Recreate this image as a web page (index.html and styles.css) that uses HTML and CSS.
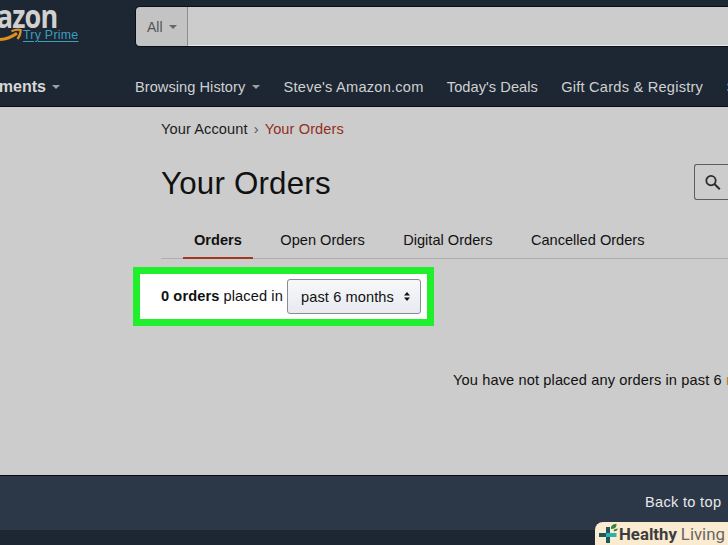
FILE: index.html
```html
<!DOCTYPE html>
<html lang="en">
<head>
  <meta charset="UTF-8">
  <meta name="viewport" content="width=device-width, initial-scale=1.0">
  <title>Your Orders</title>
  <link rel="stylesheet" href="styles.css">
</head>
<body>

  <header class="header">
    <div class="header-top">
      <div class="logo">
        <div class="logo-text">amazon</div>
        <svg class="logo-smile" width="24" height="16" viewBox="0 0 24 16">
          <path d="M0 12.4 Q9 12 17 6.2" fill="none" stroke="#e0901c" stroke-width="3"/>
          <path d="M11.5 4.2 Q16.5 2 20.6 3 Q21 7.5 17.5 12" fill="none" stroke="#e0901c" stroke-width="2.2"/>
        </svg>
        <a class="logo-prime">Try Prime</a>
      </div>
      <div class="search">
        <div class="search-category">All <span class="caret"></span></div>
        <div class="search-input"></div>
      </div>
    </div>
    <div class="header-bottom">
      <div class="departments"><span class="departments-text">Departments</span><span class="caret"></span></div>
      <nav class="nav">
        <a>Browsing History<span class="caret"></span></a>
        <a class="wide">Steve's Amazon.com</a>
        <a>Today's Deals</a>
        <a class="wide">Gift Cards &amp; Registry</a>
        <a>Sell</a>
      </nav>
    </div>
  </header>

  <main class="page">
    <div class="breadcrumb">
      <a>Your Account</a><span class="breadcrumb-arrow">›</span><a class="current">Your Orders</a>
    </div>
    <div class="title-row">
      <h1>Your Orders</h1>
      <div class="order-search">
        <svg width="16" height="16" viewBox="0 0 16 16" fill="none" stroke="#2b2b2b">
          <circle cx="6" cy="5.6" r="4.7" stroke-width="1.8"/>
          <path d="M9.4 9 L14.8 14.2" stroke-width="2"/>
        </svg>
      </div>
    </div>
    <div class="tabs">
      <a class="tab active">Orders</a>
      <a class="tab">Open Orders</a>
      <a class="tab">Digital Orders</a>
      <a class="tab">Cancelled Orders</a>
    </div>
    <div class="filter">
      <span class="filter-label"><b>0 orders</b> placed in</span>
      <div class="filter-select">
        <span>past 6 months</span>
        <svg width="6" height="9" viewBox="0 0 6 9" fill="#111">
          <path d="M3 0 L6 3.4 H0 Z"/>
          <path d="M0 5.6 H6 L3 9 Z"/>
        </svg>
      </div>
    </div>
    <p class="empty">You have not placed any orders in past 6 <span>months</span></p>
  </main>

  <footer class="footer">
    <div class="back-to-top">Back to top</div>
    <div class="footer-links"></div>
  </footer>

  <div class="watermark">
    <svg width="20" height="22" viewBox="0 0 20 22">
      <path d="M9 4 V20" stroke="#1b5860" stroke-width="4"/>
      <path d="M0 12 H17.5" stroke="#2fb0aa" stroke-width="4"/>
      <path d="M0 12 H7" stroke="#1b5860" stroke-width="4"/>
      <path d="M12 6 Q11 1.5 17.5 .8 Q18 6 12 6 Z" fill="#37843a"/>
      <path d="M14.5 8 Q15 5 19 5.8 Q18 9 14.5 8 Z" fill="#37843a"/>
    </svg>
    <b>Healthy</b><span>Living</span>
  </div>

</body>
</html>
```
FILE: styles.css
```css
* {
  box-sizing: border-box;
}

body {
  margin: 0;
  width: 728px;
  height: 545px;
  overflow: hidden;
  position: relative;
  background-color: #cccccc;
  color: #111;
  font-family: "Liberation Sans", Arial, sans-serif;
  font-size: 14.6px;
  line-height: 20px;
  white-space: nowrap;
}

/* Header */
.header {
  height: 107px;
  overflow: hidden;
  background-color: #1d2733;
  border-bottom: 1px solid #0a0d10;
  color: #d0d0d0;
}

.header-top {
  display: flex;
  height: 67px;
  padding-top: 6px;
}

.logo {
  position: relative;
  width: 135px;
  flex: none;
}

.logo-text {
  position: absolute;
  right: 78px;
  top: -8px;
  font-family: "Open Sans", sans-serif;
  font-size: 33px;
  font-weight: bold;
  line-height: 36px;
  letter-spacing: -1px;
  transform: scaleX(0.82);
  transform-origin: right;
}

.logo-smile {
  position: absolute;
  left: 0;
  top: 21px;
}

.logo-prime {
  position: absolute;
  left: 23px;
  top: 21px;
  font-size: 12.4px;
  line-height: 16px;
  letter-spacing: 0.25px;
  color: #3c9dbd;
  text-decoration: underline;
  text-underline-offset: 2px;
}

.search {
  display: flex;
  flex: 1;
  height: 41px;
  border: 1px solid #0c1015;
  border-right: 0;
  border-radius: 5px 0 0 5px;
  overflow: hidden;
}

.search-category {
  display: flex;
  align-items: center;
  width: 52px;
  padding-left: 11px;
  background-color: #c3c3c3;
  border-right: 1px solid #8e8e8e;
  color: #555;
  font-size: 14px;
}

.search-category .caret {
  margin-left: 6px;
  border-top-color: #666;
}

.search-input {
  flex: 1;
  background-color: #cccccc;
  border-bottom: 1px solid #e8e8e8;
}

.caret {
  display: inline-block;
  border: 4.5px solid transparent;
  border-top-color: #999fa8;
  border-bottom: 0;
}

.header-bottom {
  display: flex;
  height: 40px;
  line-height: 40px;
}

.departments {
  display: flex;
  align-items: center;
  justify-content: flex-end;
  width: 60px;
  margin-right: 75px;
  flex: none;
  font-weight: bold;
  font-size: 16px;
  color: #d8d8d8;
}

.departments .caret {
  margin-left: 6px;
}

.nav {
  display: flex;
  gap: 23.3px;
  letter-spacing: 0.05px;
}

.nav a {
  display: flex;
  align-items: center;
}

.nav .wide {
  letter-spacing: 0.23px;
}

.nav .caret {
  margin-left: 7px;
}

/* Page content */
.page {
  height: 368px;
  padding-left: 161px;
}

.breadcrumb {
  padding-top: 12px;
  letter-spacing: 0.1px;
  color: #1c1c1c;
}

.breadcrumb-arrow {
  margin: 0 6px;
  color: #555;
}

.breadcrumb .current {
  color: #932f1c;
}

.title-row {
  display: flex;
  justify-content: space-between;
  height: 35px;
  margin-top: 25px;
}

.title-row h1 {
  margin: 0;
  font-size: 31.3px;
  font-weight: normal;
  line-height: 40px;
  letter-spacing: 0.2px;
}

.order-search {
  width: 34px;
  height: 36px;
  padding: 10px 0 0 10px;
  border: 1px solid #5d5d5d;
  border-right: 0;
  border-radius: 3px 0 0 3px;
}

.tabs {
  display: flex;
  gap: 16.5px;
  height: 36px;
  margin-top: 24px;
  padding-left: 22px;
  border-bottom: 1px solid #adadad;
}

.tab {
  height: 36px;
  padding: 7px 11px 0;
}

.tab.active {
  font-weight: bold;
  border-bottom: 2px solid #a6361f;
}

/* Highlighted order filter */
.filter {
  display: flex;
  width: 301px;
  height: 59px;
  margin: 8px 0 0 -28px;
  padding: 5px 0 0 21px;
  border: 7px solid #1ff02b;
  background-color: #fff;
  letter-spacing: 0.1px;
}

.filter-label {
  width: 126px;
  padding-top: 7px;
}

.filter-select {
  display: flex;
  align-items: center;
  width: 134px;
  height: 35px;
  padding-left: 13px;
  border: 1px solid #888c96;
  border-radius: 3px;
  background: linear-gradient(#f7f8fa, #e8eaef);
}

.filter-select svg {
  margin-left: 10px;
}

.empty {
  margin: 44px 0 0 292px;
  letter-spacing: 0.12px;
}

.empty span {
  color: #b5803a;
}

/* Footer */
.footer {
  border-top: 1px solid #06090d;
}

.back-to-top {
  height: 54px;
  padding: 16px 0 0 645px;
  background-color: #2c3848;
  color: #e8e8e8;
  letter-spacing: 0.3px;
}

.footer-links {
  height: 15px;
  background-color: #1d2733;
}

.watermark {
  position: absolute;
  right: 0;
  bottom: 0;
  display: flex;
  align-items: center;
  width: 133px;
  height: 23px;
  padding-left: 4px;
  border-radius: 8px 0 0 0;
  background-color: #fbebd0;
  color: #3d3d3d;
  font-family: Roboto, sans-serif;
  font-size: 16.8px;
}

.watermark span {
  margin-left: 4px;
  color: #666;
}
```
